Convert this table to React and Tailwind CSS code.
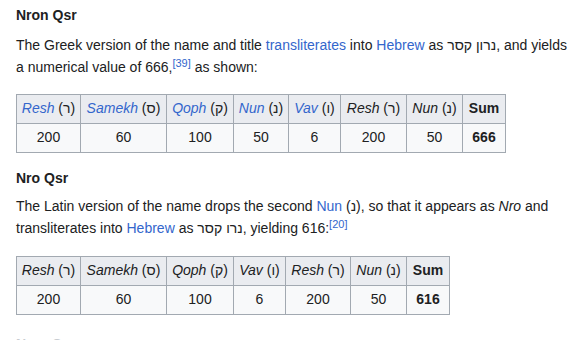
import React from "react";

const link = "text-[#3366cc]";

const Table = ({ cols, sum, className }) => (
  <table className={`border-collapse text-[14px] text-[#202122] ${className}`}>
    <thead>
      <tr className="bg-[#eaecf0]">
        {cols.map((c, i) => (
          <th
            key={i}
            style={{ width: c.w }}
            className="h-[29px] border border-[#a2a9b1] px-[3px] text-center font-normal whitespace-nowrap"
          >
            <i className={c.link ? link : ""}>{c.name}</i> ({c.heb})
          </th>
        ))}
        <th className="h-[29px] w-[43px] border border-[#a2a9b1] px-[3px] text-center font-bold whitespace-nowrap">
          Sum
        </th>
      </tr>
    </thead>
    <tbody>
      <tr className="bg-[#f8f9fa]">
        {cols.map((c, i) => (
          <td key={i} className="h-[29px] border border-[#a2a9b1] px-[3px] text-center">
            {c.val}
          </td>
        ))}
        <td className="h-[29px] border border-[#a2a9b1] px-[3px] text-center font-bold">
          {sum}
        </td>
      </tr>
    </tbody>
  </table>
);

export default function App() {
  const greek = [
    { name: "Resh", heb: "ר", val: 200, w: 64, link: true },
    { name: "Samekh", heb: "ס", val: 60, w: 86, link: true },
    { name: "Qoph", heb: "ק", val: 100, w: 67, link: true },
    { name: "Nun", heb: "נ", val: 50, w: 55, link: true },
    { name: "Vav", heb: "ו", val: 6, w: 52, link: true },
    { name: "Resh", heb: "ר", val: 200, w: 66 },
    { name: "Nun", heb: "נ", val: 50, w: 56 },
  ];
  const latin = [
    { name: "Resh", heb: "ר", val: 200, w: 64 },
    { name: "Samekh", heb: "ס", val: 60, w: 86 },
    { name: "Qoph", heb: "ק", val: 100, w: 67 },
    { name: "Vav", heb: "ו", val: 6, w: 52 },
    { name: "Resh", heb: "ר", val: 200, w: 65 },
    { name: "Nun", heb: "נ", val: 50, w: 56 },
  ];

  return (
    <div className="w-[578px] h-[340px] overflow-hidden bg-white px-4 text-[#202122] text-[14px] font-['Liberation_Sans','DejaVu_Sans',sans-serif]">
      <h3 className="mt-[4px] font-bold leading-[22px]">Nron Qsr</h3>
      <p className="mt-[8px] leading-[22.4px] w-[552px]">
        The Greek version of the name and title{" "}
        <span className={link}>transliterates</span> into{" "}
        <span className={link}>Hebrew</span> as <span dir="rtl">נרון קסר</span>, and yields a
        numerical value of 666,
        <sup className={`${link} text-[11px]`}>[39]</sup> as shown:
      </p>
      <Table cols={greek} sum={666} className="mt-[15px]" />

      <h3 className="mt-[14px] font-bold leading-[22px]">Nro Qsr</h3>
      <p className="mt-[6px] leading-[22.4px] w-[552px]">
        The Latin version of the name drops the second <span className={link}>Nun</span> (נ),
        so that it appears as <i>Nro</i> and transliterates into{" "}
        <span className={link}>Hebrew</span> as <span dir="rtl">נרו קסר</span>, yielding 616:
        <sup className={`${link} text-[11px]`}>[20]</sup>
      </p>
      <Table cols={latin} sum={616} className="mt-[16px]" />

      <h3 className="mt-[18px] font-bold leading-[22px] text-[#c8ccd1]">Nero Caesar</h3>
    </div>
  );
}
